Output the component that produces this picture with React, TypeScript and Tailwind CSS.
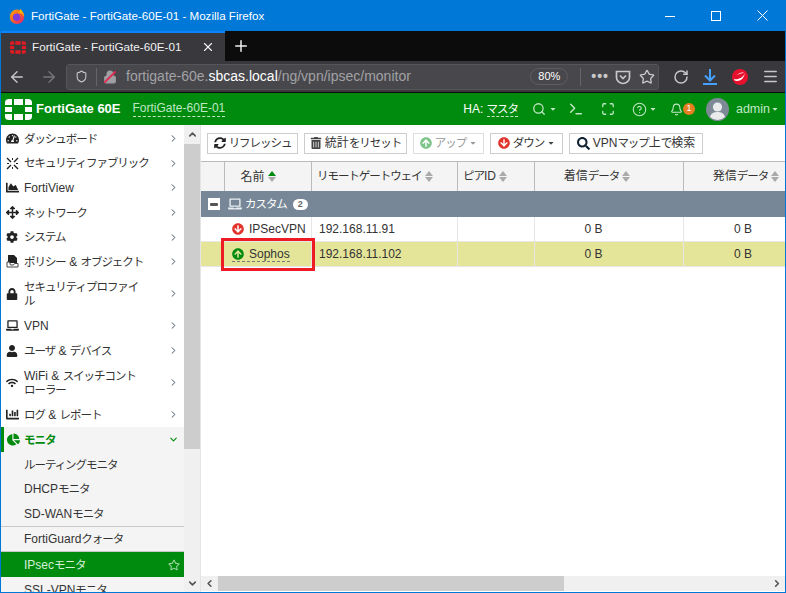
import { ArrowLeft, ArrowRight, ChevronDown, ChevronLeft, ChevronRight, ChevronUp, Maximize, RotateCw, Search, Shield, Star, X, Plus, Menu, Bell, CircleHelp, Terminal, Lock } from "lucide-react";
import {
  FaTachometerAlt, FaArrowsAlt, FaCog, FaLock, FaUser, FaWifi, FaChartBar, FaChartPie, FaLaptop, FaChartArea,
  FaArrowCircleUp, FaArrowCircleDown, FaTrashAlt, FaSyncAlt, FaSearch, FaRegStar, FaCaretDown,
} from "react-icons/fa";

const font = "font-['Liberation_Sans','Noto_Sans_CJK_JP',sans-serif]";

// the kana in the reference are much narrower than Noto's, so squeeze those runs only
function J({ children }: { children: string }) {
  return (
    <>
      {children.split(/([\u3040-\u30ff]+)/).map((part, i) =>
        i % 2 === 1 ? (
          <span key={i} className="text-[11.5px] tracking-[-1.05px]">{part}</span>
        ) : (
          part
        )
      )}
    </>
  );
}

function FortiLogo({ color, className }: { color: string; className: string }) {
  return (
    <svg viewBox="0 0 27 21" className={className} fill={color}>
      <path d="M0 6V3.5Q0 0 4 0h3v6zM9 0h9v6H9zM20 0h3q4 0 4 3.5V6h-7zM0 8h7v5H0zM20 8h7v5h-7zM0 15h7v6H4q-4 0-4-3.5zM9 15h9v6H9zM20 15h7v2.5q0 3.5-4 3.5h-3z" />
    </svg>
  );
}

function FirefoxLogo() {
  return (
    <svg viewBox="0 0 20 20" className="w-4 h-[18px]">
      <defs>
        <linearGradient id="fx" x1="0" y1="0" x2="1" y2="1">
          <stop offset="0" stopColor="#ffb000" />
          <stop offset="0.55" stopColor="#ff5a2a" />
          <stop offset="1" stopColor="#d6188c" />
        </linearGradient>
      </defs>
      <circle cx="10" cy="11" r="9" fill="url(#fx)" />
      <circle cx="9.5" cy="11.5" r="4.6" fill="#7d3cdc" />
      <path d="M14 1c3 3 5 6 5 10-2-4-5-5-8-5 2-1 3-3 3-5z" fill="#ffb000" />
    </svg>
  );
}

function TrendIcon() {
  return (
    <svg viewBox="0 0 16 16" className="w-4 h-4">
      <circle cx="8" cy="8" r="8" fill="#e8112d" />
      <path d="M2 10c4 1 9-1 11-6-1 5-4 8-8 8-2 0-3-1-3-2z" fill="#fff" />
      <path d="M5 6c2-2 5-3 7-2-3 0-5 1-7 2z" fill="#fff" />
    </svg>
  );
}

function FabricIcon() {
  return (
    <svg viewBox="0 0 13 13" className="w-[13px] h-[13px]" fill="none" stroke="#222" strokeWidth="1.4">
      <path d="M1 1l4 4M8 8l4 4M12 1L8 5M5 8l-4 4" />
      <path d="M6.5 1v2M6.5 10v2M1 6.5h2M10 6.5h2" strokeWidth="1" />
    </svg>
  );
}

function PolicyIcon() {
  return (
    <svg viewBox="0 0 13 13" className="w-[13px] h-[13px]">
      <path d="M2 0h6l3 3v5H2z" fill="#222" />
      <path d="M1 7v5h11V8.5H8.5L7.5 10h-3L3.5 7z" fill="#fff" stroke="#444" strokeWidth="1" />
    </svg>
  );
}

function Avatar() {
  return (
    <svg viewBox="0 0 23 23" className="w-[23px] h-[23px] mr-[7px]">
      <circle cx="11.5" cy="11.5" r="11.5" fill="#7d8a96" />
      <circle cx="11.5" cy="9" r="4.6" fill="#e8eaec" />
      <path d="M4 19c1-4 4-5 7.5-5s6.5 1 7.500 5a11 11 0 0 1-15 0z" fill="#e8eaec" />
    </svg>
  );
}

type NavItem = { icon: React.ReactNode; label: string; label2?: string; h: string };

const navItems: NavItem[] = [
  { icon: <FaTachometerAlt size={13} />, label: "ダッシュボード", h: "h-[25px]" },
  { icon: <FabricIcon />, label: "セキュリティファブリック", h: "h-[24px]" },
  { icon: <FaChartArea size={13} />, label: "FortiView", h: "h-[25px]" },
  { icon: <FaArrowsAlt size={13} />, label: "ネットワーク", h: "h-[25px]" },
  { icon: <FaCog size={12} />, label: "システム", h: "h-[24px]" },
  { icon: <PolicyIcon />, label: "ポリシー & オブジェクト", h: "h-[25px]" },
  { icon: <FaLock size={12} />, label: "セキュリティプロファイ", label2: "ル", h: "h-[39px]" },
  { icon: <FaLaptop size={13} />, label: "VPN", h: "h-[25px]" },
  { icon: <FaUser size={12} />, label: "ユーザ & デバイス", h: "h-[25px]" },
  { icon: <FaWifi size={12} />, label: "WiFi & スイッチコント", label2: "ローラー", h: "h-[39px]" },
  { icon: <FaChartBar size={13} />, label: "ログ & レポート", h: "h-[25px]" },
];

const subItems = [
  { label: "ルーティングモニタ", h: "h-[25px]" },
  { label: "DHCPモニタ", h: "h-[24px]" },
  { label: "SD-WANモニタ", h: "h-[25px]" },
];

function Sidebar() {
  return (
    <div className="w-[199px] flex shrink-0 h-full">
      <div className="w-[183px] bg-white text-[12px] text-[#333] leading-[14px] overflow-hidden">
        <div className="h-[1px]" />
        {navItems.map((item, i) => (
          <div key={i} className={`${item.h} flex items-center pl-[5px] pr-[5px]`}>
            <span className="w-[18px] flex justify-start text-[#222]">{item.icon}</span>
            <span className="flex-1 whitespace-nowrap">
              <J>{item.label}</J>
              {item.label2 && <br />}
              {item.label2 && <J>{item.label2}</J>}
            </span>
            <ChevronRight size={11} strokeWidth={2} className="text-[#345]" />
          </div>
        ))}
        <div className="bg-[#f4f4f4]">
          <div className="h-[25px] flex items-center border-l-[3px] border-[#008a0e] pl-[3px] pr-[5px] text-[#008a0e] font-bold">
            <span className="w-[17px]"><FaChartPie size={13} /></span>
            <span className="flex-1"><J>モニタ</J></span>
            <ChevronDown size={11} strokeWidth={2.5} />
          </div>
          {subItems.map((s) => (
            <div key={s.label} className={`${s.h} flex items-center pl-[23px]`}><span><J>{s.label}</J></span></div>
          ))}
          <div className="h-[26px] flex items-center pl-[23px] border-t border-b border-[#c8c8c8]"><span><J>FortiGuardクォータ</J></span></div>
          <div className="h-[25px] flex items-center pl-[23px] pr-[4px] bg-[#008a0e] text-[#d7f0d7]">
            <span className="flex-1"><J>IPsecモニタ</J></span>
            <FaRegStar size={12} className="text-[#9fd8a4]" />
          </div>
          <div className="h-[25px] flex items-center pl-[23px]"><span><J>SSL-VPNモニタ</J></span></div>
        </div>
      </div>
      <div className="w-[16px] bg-[#f0f0f0] flex flex-col items-center">
        <div className="h-[19px] flex items-center justify-center w-full">
          <ChevronUp size={11} strokeWidth={3.5} className="text-[#555]" />
        </div>
        <div className="w-full h-[305px] bg-[#cdcdcd]" />
        <div className="flex-1" />
        <div className="h-[15px] flex items-center justify-center mb-[1px]">
          <ChevronDown size={11} strokeWidth={3.5} className="text-[#555]" />
        </div>
      </div>
    </div>
  );
}

function ToolButton({ icon, label, caret, muted, w }: { icon: React.ReactNode; label: string; caret?: boolean; muted?: boolean; w: string }) {
  return (
    <div className={`${w} h-[21px] flex items-center justify-center gap-[3px] border text-[12px] ${muted ? "text-[#999] border-[#ddd]" : "text-[#333] border-[#ccc]"}`}>
      {icon}
      <span className="whitespace-nowrap"><J>{label}</J></span>
      {caret && <FaCaretDown size={8} className={muted ? "text-[#999]" : "text-[#444]"} />}
    </div>
  );
}

function Th({ w, children, pr }: { w: string; children: React.ReactNode; pr?: string }) {
  return (
    <div className={`${w} shrink-0 h-full flex items-center ${pr ? `justify-center ${pr}` : "pl-[5px]"} border-r border-[#bbb] gap-[3px] whitespace-nowrap`}>
      {children}
    </div>
  );
}

function SortIcon({ active }: { active?: boolean }) {
  return (
    <svg viewBox="0 0 8 11" className="w-[8px] h-[11px] shrink-0">
      <path d="M4 0l4 5H0z" fill={active ? "#008a0e" : "#aaa"} />
      <path d="M4 11L0 6h8z" fill="#aaa" />
    </svg>
  );
}

function Row({ bg, icon, name, ip, dashed }: { bg: string; icon: React.ReactNode; name: string; ip: string; dashed?: boolean }) {
  return (
    <div className={`h-[25px] flex shrink-0 items-center border-b border-[#e6e6e6] ${bg}`}>
      <div className="w-[24px] h-full shrink-0" />
      <div className="w-[87px] shrink-0 h-full flex items-center border-r border-[#e6e6e6] pl-[7px]">
        <span className={`flex items-center gap-[5px] leading-[14px] ${dashed ? "border-b border-dashed border-[#777]" : ""}`}>
          {icon}
          {name}
        </span>
      </div>
      <div className="w-[146px] shrink-0 h-full flex items-center border-r border-[#e6e6e6] pl-[7px]">{ip}</div>
      <div className="w-[77px] shrink-0 h-full border-r border-[#e6e6e6]" />
      <div className="w-[149px] shrink-0 h-full flex items-center justify-center pr-[31px] border-r border-[#e6e6e6]">0 B</div>
      <div className="w-[149px] shrink-0 h-full flex items-center justify-center pr-[31px]">0 B</div>
    </div>
  );
}

function Content() {
  return (
    <div className="flex-1 min-w-0 h-full flex flex-col bg-white text-[12px] text-[#333] relative border-l border-[#e4e4e4] overflow-hidden">
      <div className="h-[36px] shrink-0 flex items-center gap-[6px] pl-[6px]">
        <ToolButton w="w-[91px]" label="リフレッシュ" icon={<FaSyncAlt size={12} className="text-[#222]" />} />
        <ToolButton w="w-[103px]" label="統計をリセット" icon={<FaTrashAlt size={12} className="text-[#444]" />} />
        <ToolButton w="w-[71px]" muted caret label="アップ" icon={<FaArrowCircleUp size={12} className="text-[#7fc48a]" />} />
        <ToolButton w="w-[73px]" caret label="ダウン" icon={<FaArrowCircleDown size={12} className="text-[#e0342c]" />} />
        <ToolButton w="w-[134px]" label="VPNマップ上で検索" icon={<FaSearch size={13} className="text-[#123]" />} />
      </div>
      <div className="h-[30px] shrink-0 flex bg-[#f4f4f4] border-t border-[#bbb]">
        <div className="w-[24px] shrink-0 border-r border-[#bbb]" />
        <Th w="w-[87px]" pr="pr-[20px]">名前<SortIcon active /></Th>
        <Th w="w-[146px]"><span><J>リモートゲートウェイ</J></span><SortIcon /></Th>
        <Th w="w-[77px]"><span><J>ピアID</J></span><SortIcon /></Th>
        <Th w="w-[149px]" pr="pr-[24px]"><span><J>着信データ</J></span><SortIcon /></Th>
        <Th w="w-[149px]" pr="pr-[24px]"><span><J>発信データ</J></span><SortIcon /></Th>
      </div>
      <div className="h-[26px] shrink-0 flex items-center bg-[#778797] text-white pl-[7px]">
        <span className="w-[12px] h-[12px] bg-white flex items-center justify-center mr-[8px]">
          <span className="w-[8px] h-[3px] rounded-[1px] bg-[#555]" />
        </span>
        <FaLaptop size={14} className="text-[#e8edf2] mr-[3px]" />
        <span><J>カスタム</J></span>
        <span className="bg-white text-[#666] rounded-full w-[15px] h-[11px] ml-[6px] text-[9px] leading-[11px] text-center font-bold">2</span>
      </div>
      <Row bg="bg-white" name="IPSecVPN" ip="192.168.11.91" icon={<FaArrowCircleDown size={12} className="text-[#e0342c]" />} />
      <Row bg="bg-[#e5e59a]" name="Sophos" ip="192.168.11.102" dashed icon={<FaArrowCircleUp size={12} className="text-[#008a0e]" />} />
      <div className="flex-1" />
      <div className="h-[15px] shrink-0 mb-[1px] bg-[#f0f0f0] flex items-center">
        <ChevronLeft size={11} strokeWidth={3.5} className="text-[#555] w-[17px] shrink-0" />
        <div className="w-[346px] h-full bg-[#cdcdcd]" />
        <div className="flex-1" />
        <ChevronRight size={11} strokeWidth={3.5} className="text-[#555] w-[16px] shrink-0" />
      </div>
      <div className="absolute left-[20px] top-[113px] w-[94px] h-[33px] border-[3px] border-[#ed1c24]" />
    </div>
  );
}

export default function App() {
  return (
    <div className={`w-[786px] h-[593px] overflow-hidden flex flex-col bg-[#0078d7] border border-t-0 border-[#0078d7] ${font}`}>
      <div className="h-[31px] shrink-0 flex items-center text-white text-[11.6px]">
        <div className="pl-[8px] pr-[6px] flex"><FirefoxLogo /></div>
        <span>FortiGate - FortiGate-60E-01 - Mozilla Firefox</span>
        <div className="flex-1" />
        <div className="w-[46px] flex justify-center">
          <svg viewBox="0 0 10 10" className="w-[10px] h-[10px]" stroke="#fff" shapeRendering="crispEdges"><path d="M0 5.5h10" /></svg>
        </div>
        <div className="w-[46px] flex justify-center">
          <svg viewBox="0 0 10 10" className="w-[10px] h-[10px]" stroke="#fff" fill="none" shapeRendering="crispEdges"><path d="M.5.5h9v9h-9z" /></svg>
        </div>
        <div className="w-[46px] flex justify-center">
          <svg viewBox="0 0 11 11" className="w-[11px] h-[11px]" stroke="#fff" strokeWidth="1"><path d="M.5.5l10 10M10.500.5l-10 10" /></svg>
        </div>
      </div>
      <div className="h-[30px] shrink-0 flex bg-[#0c0c0d] text-[#f0f0f0] text-[11.700px]">
        <div className="w-[224px] bg-[#38383d] border-t-2 border-[#0a84ff] flex items-center pl-[9px] pr-[10px]">
          <FortiLogo color="#e01b24" className="w-[16px] h-[13px] mr-[6px]" />
          <span className="flex-1">FortiGate - FortiGate-60E-01</span>
          <X size={14} strokeWidth={2} />
        </div>
        <div className="w-[32px] flex items-center justify-center"><Plus size={18} strokeWidth={2} /></div>
      </div>
      <div className="h-[32px] shrink-0 flex items-center bg-[#38383d] border-b border-[#0c0c0d] text-[#c8c8c9]">
        <div className="w-[31px] flex justify-center"><ArrowLeft size={18} strokeWidth={1.8} /></div>
        <div className="w-[34px] flex justify-center text-[#77777b]"><ArrowRight size={18} strokeWidth={1.8} /></div>
        <div className="flex-1 h-[26px] mr-[8px] bg-[#47474c] border border-[#55555a] rounded-[3px] flex items-center">
          <Shield size={13} strokeWidth={2} className="ml-[8px] mr-[8px]" />
          <span className="w-px h-[18px] bg-[#66666a] mr-[6px]" />
          <span className="relative mr-[9px] flex">
            <Lock size={14} fill="#a0a0a4" className="text-[#a0a0a4]" />
            <span className="absolute left-[-1px] top-[6px] w-[16px] h-[2px] bg-[#e22850] -rotate-45" />
          </span>
          <span className="text-[#a2a2a5] text-[14px]">fortigate-60e.<span className="text-white">sbcas.local</span>/ng/vpn/ipsec/monitor</span>
          <div className="flex-1" />
          <span className="w-[38px] h-[17px] rounded-full border border-[#5e5e62] text-[11px] text-white flex items-center justify-center mr-[12px]">80%</span>
          <span className="w-px h-[18px] bg-[#66666a] mr-[10px]" />
          <span className="text-[14px] font-bold tracking-[1px] leading-none mr-[6px] -mt-[2px]">•••</span>
          <svg viewBox="0 0 16 16" className="w-[16px] h-[16px] mr-[8px]" fill="none" stroke="currentColor" strokeWidth="1.7">
            <path d="M1.500 2.500h13v6a6.500 6 0 0 1-13 0zM5 6.500l3 3 3-3" />
          </svg>
          <Star size={16} strokeWidth={2} className="mr-[3px]" />
        </div>
        <div className="w-[28px] flex justify-center"><RotateCw size={16} strokeWidth={2.2} /></div>
        <div className="w-[30px] flex justify-center">
          <svg viewBox="0 0 14 16" className="w-[14px] h-[16px]" fill="none" stroke="#45a1ff" strokeWidth="2">
            <path d="M7 0v11M2 6.500l5 5 5-5M0 15h14" />
          </svg>
        </div>
        <div className="w-[30px] flex justify-center"><TrendIcon /></div>
        <div className="w-[30px] flex justify-center"><Menu size={17} strokeWidth={2.2} /></div>
      </div>
      <div className="h-[32px] shrink-0 flex items-center bg-[#008a0e] text-[12px] text-[#bfe8c4]">
        <FortiLogo color="#ffffff" className="w-[27px] h-[21px] ml-[4px] mr-[4px]" />
        <span className="text-white font-bold text-[13px] mr-[12px]">FortiGate 60E</span>
        <span className="border-b border-dashed border-[#bfe8c4] leading-[15px]">FortiGate-60E-01</span>
        <div className="flex-1" />
        <span className="text-white mr-[14px]">HA: <span className="border-b border-dashed border-[#bfe8c4]"><J>マスタ</J></span></span>
        <Search size={14} strokeWidth={2.2} />
        <FaCaretDown size={8} className="ml-[3px] mr-[11px]" />
        <Terminal size={16} strokeWidth={2.2} className="mr-[17px]" />
        <Maximize size={14} strokeWidth={2.2} className="mr-[17px]" />
        <CircleHelp size={15} strokeWidth={1.7} />
        <FaCaretDown size={8} className="ml-[2px] mr-[13px]" />
        <Bell size={13} strokeWidth={2} />
        <span className="w-[12px] h-[12px] rounded-full bg-[#e67e22] text-white text-[9px] flex items-center justify-center mr-[11px]">1</span>
        <Avatar />
        <span className="text-[12.500px]">admin</span>
        <FaCaretDown size={8} className="ml-[1px] mr-[6px]" />
      </div>
      <div className="flex-1 min-h-0 flex">
        <Sidebar />
        <Content />
      </div>
    </div>
  );
}
